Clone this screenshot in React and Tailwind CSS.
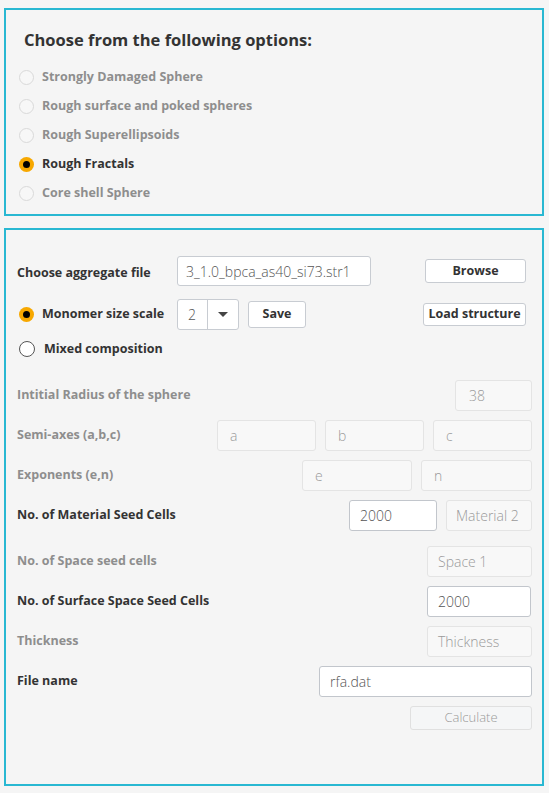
import React from 'react';

const font = { fontFamily: '"Open Sans", "DejaVu Sans", sans-serif' };

const Radio = ({ state }) => {
  if (state === 'on') {
    return (
      <span className="flex h-[15px] w-[15px] shrink-0 items-center justify-center rounded-full bg-[#f7a800]">
        <span className="h-[7px] w-[7px] rounded-full bg-black" />
      </span>
    );
  }
  if (state === 'off') {
    return <span className="h-[16px] w-[16px] shrink-0 rounded-full border border-[#555] bg-white" />;
  }
  return <span className="h-[15px] w-[15px] shrink-0 rounded-full border border-[#d9d9d9] bg-[#f7f7f7]" />;
};

const Field = ({ value, placeholder, enabled, className = '' }) => (
  <div
    className={`flex h-[31px] items-center rounded-[3px] border px-[10px] text-[14px] font-light ${
      enabled ? 'border-[#c2c6cc] bg-white text-[#555]' : 'border-[#e4e4e4] bg-[#f8f8f8] text-[#9a9a9a]'
    } ${className}`}
  >
    {value || placeholder}
  </div>
);

const Label = ({ children, dim }) => (
  <span className={`text-[12.5px] font-bold ${dim ? 'text-[#8e8e8e]' : 'text-[#333]'}`}>{children}</span>
);

const options = [
  ['Strongly Damaged Sphere', 'dis'],
  ['Rough surface and poked spheres', 'dis'],
  ['Rough Superellipsoids', 'dis'],
  ['Rough Fractals', 'on'],
  ['Core shell Sphere', 'dis'],
];

export default function App() {
  return (
    <div className="min-h-[793px] w-[549px] bg-[#f5f5f5] pl-[4px] pr-[5px] pt-[8px]" style={font}>
      <div className="h-[208px] border-2 border-[#29b8d2] pl-[13px] pt-[18px]">
        <h1 className="pl-[5px] text-[16.5px] font-bold leading-[24px] text-[#333]">
          Choose from the following options:
        </h1>
        <div className="mt-[11px] flex flex-col">
          {options.map(([text, st]) => (
            <div key={text} className="flex h-[29px] items-center gap-[8px]">
              <Radio state={st} />
              <span className={`text-[12.5px] font-bold ${st === 'on' ? 'text-[#333]' : 'text-[#8e8e8e]'}`}>{text}</span>
            </div>
          ))}
        </div>
      </div>

      <div className="mt-[12px] h-[558px] border-2 border-[#29b8d2] pl-[11px] pr-[10px] pt-[26px]">
        <div className="flex h-[30px] items-center">
          <div className="w-[160px]">
            <Label>Choose aggregate file</Label>
          </div>
          <div className="flex h-[30px] w-[194px] items-center rounded-[3px] border border-[#c8ccd2] bg-white px-[8px] text-[14px] font-light text-[#555]">
            3_1.0_bpca_as40_si73.str1
          </div>
          <div className="flex-1" />
          <button className="mr-[6px] h-[24px] w-[101px] rounded-[3px] border border-[#c8ccd2] bg-white text-[12.5px] font-bold text-[#333]">
            Browse
          </button>
        </div>

        <div className="mt-[13px] flex h-[31px] items-center">
          <div className="flex w-[160px] items-center gap-[8px] pl-[2px]">
            <Radio state="on" />
            <Label>Monomer size scale</Label>
          </div>
          <div className="flex h-[31px] w-[62px] items-center rounded-[3px] border border-[#c8ccd2] bg-white text-[14px] font-light text-[#555]">
            <span className="w-[30px] border-r border-[#c8ccd2] pl-[10px] leading-[29px]">2</span>
            <span className="flex flex-1 justify-center">
              <svg width="10" height="6" viewBox="0 0 10 6">
                <path d="M0 0 L10 0 L5 5 Z" fill="#444" />
              </svg>
            </span>
          </div>
          <button className="ml-[9px] h-[27px] w-[58px] rounded-[3px] border border-[#c8ccd2] bg-white text-[12.5px] font-bold text-[#333]">
            Save
          </button>
          <div className="flex-1" />
          <button className="mr-[6px] h-[23px] w-[103px] rounded-[3px] border border-[#c8ccd2] bg-white text-[12.5px] font-bold text-[#333]">
            Load structure
          </button>
        </div>

        <div className="mt-[9px] flex h-[20px] items-center gap-[9px] pl-[2px]">
          <Radio state="off" />
          <Label>Mixed composition</Label>
        </div>

        <div className="mt-[21px] flex flex-col gap-[9px]">
          <div className="flex h-[31px] items-center justify-between">
            <Label dim>Intitial Radius of the sphere</Label>
            <Field value="38" className="w-[77px] pl-[13px]" />
          </div>
          <div className="flex h-[31px] items-center">
            <Label dim>Semi-axes (a,b,c)</Label>
            <div className="flex-1" />
            <div className="flex gap-[9px]">
              <Field placeholder="a" className="w-[99px] pl-[12px]" />
              <Field placeholder="b" className="w-[99px] pl-[12px]" />
              <Field placeholder="c" className="w-[99px] pl-[12px]" />
            </div>
          </div>
          <div className="flex h-[31px] items-center">
            <Label dim>Exponents (e,n)</Label>
            <div className="flex-1" />
            <div className="flex gap-[9px]">
              <Field placeholder="e" className="w-[110px] pl-[12px]" />
              <Field placeholder="n" className="w-[111px] pl-[12px]" />
            </div>
          </div>
          <div className="flex h-[31px] items-center">
            <Label>No. of Material Seed Cells</Label>
            <div className="flex-1" />
            <div className="flex gap-[9px]">
              <Field value="2000" enabled className="w-[88px]" />
              <Field placeholder="Material 2" className="w-[86px] pl-[9px]" />
            </div>
          </div>
        </div>

        <div className="mt-[15px] flex flex-col gap-[9px]">
          <div className="flex h-[31px] items-center justify-between">
            <Label dim>No. of Space seed cells</Label>
            <Field placeholder="Space 1" className="w-[105px]" />
          </div>
          <div className="flex h-[31px] items-center justify-between">
            <Label>No. of Surface Space Seed Cells</Label>
            <Field value="2000" enabled className="mr-[1px] w-[104px]" />
          </div>
          <div className="flex h-[31px] items-center justify-between">
            <Label dim>Thickness</Label>
            <Field placeholder="Thickness" className="w-[105px]" />
          </div>
          <div className="flex h-[31px] items-center justify-between">
            <Label>File name</Label>
            <Field value="rfa.dat" enabled className="w-[213px]" />
          </div>
          <div className="flex justify-end">
            <button className="h-[24px] w-[122px] rounded-[3px] border border-[#e0e0e0] bg-[#f5f6f7] text-[13px] font-light text-[#9a9a9a]">
              Calculate
            </button>
          </div>
        </div>
      </div>
    </div>
  );
}
